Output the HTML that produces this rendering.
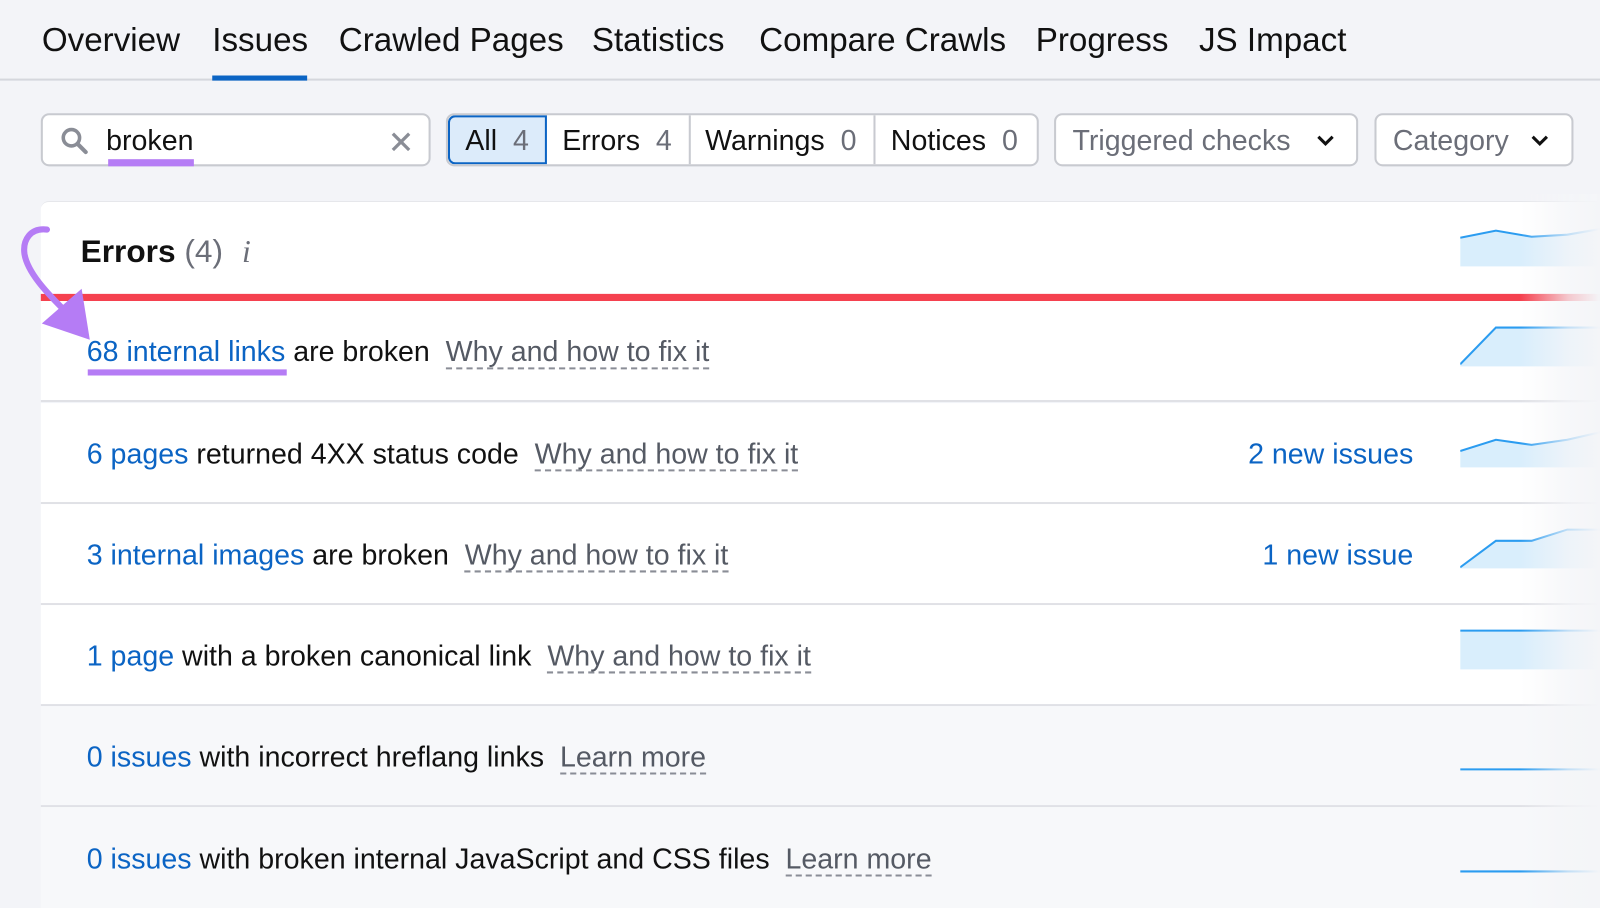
<!DOCTYPE html>
<html><head><style>
*{margin:0;padding:0;box-sizing:border-box}
body{width:1600px;height:890px;overflow:hidden;background:#f3f4f8;font-family:"Liberation Sans",sans-serif;color:#111}
#w{position:absolute;left:0;top:0;width:1568px;height:872px;transform:scale(1.0204);transform-origin:0 0}
.a{position:absolute;white-space:nowrap}
.tab{font-size:32.5px;top:21px;color:#111}
.b{color:#0b64c4}
.g{color:#6b6e78}
.w{color:#555a64;border-bottom:2px dashed #8a8d96;line-height:30px}
.row{position:absolute;left:40px;width:1528px;height:99px;background:#fff;border-bottom:2px solid #e0e1e6}
.t{font-size:28px;top:329px}
.r{right:183px;left:auto}
.box{position:absolute;top:111px;height:52px;background:#fff;border:2px solid #c8cad0;border-radius:8px;font-size:28px}
</style></head><body><div id="w">
<div class="a tab" style="left:41px">Overview</div>
<div class="a tab" style="left:208px">Issues</div>
<div class="a tab" style="left:332px">Crawled Pages</div>
<div class="a tab" style="left:580px">Statistics</div>
<div class="a tab" style="left:744px">Compare Crawls</div>
<div class="a tab" style="left:1015px">Progress</div>
<div class="a tab" style="left:1175px">JS Impact</div>
<div class="a" style="left:0;top:77px;width:1568px;height:2px;background:#d5d7dd"></div>
<div class="a" style="left:208px;top:74px;width:93px;height:5px;background:#0b64c4"></div>

<div class="box" style="left:40px;width:382px">
<svg class="a" style="left:16px;top:10px" width="30" height="30" viewBox="0 0 30 30"><circle cx="12" cy="12" r="8" fill="none" stroke="#8a8d96" stroke-width="3.5"/><path d="M18 18l8 8" stroke="#8a8d96" stroke-width="4" stroke-linecap="round"/></svg>
<div class="a" style="left:62px;top:9px;color:#111">broken</div>
<div class="a" style="left:64px;top:43px;width:84px;height:7px;background:#b57cf5"></div>
<svg class="a" style="left:340px;top:15px" width="22" height="22" viewBox="0 0 22 22"><path d="M3 3l16 16M19 3L3 19" stroke="#8a8d96" stroke-width="3.2"/></svg>
</div>
<div class="box" style="left:437px;width:581px;overflow:hidden">
<div class="a" style="left:0;top:0;width:97px;height:48px;background:#dcebfa;border:2px solid #0b64c4;border-radius:7px 0 0 7px"></div>
<div class="a" style="left:17px;top:9px">All <span class="g">&nbsp;4</span></div>
<div class="a" style="left:236px;top:0;width:2px;height:48px;background:#c8cad0"></div>
<div class="a" style="left:417px;top:0;width:2px;height:48px;background:#c8cad0"></div>
<div class="a" style="left:112px;top:9px">Errors <span class="g">&nbsp;4</span></div>
<div class="a" style="left:252px;top:9px">Warnings <span class="g">&nbsp;0</span></div>
<div class="a" style="left:434px;top:9px">Notices <span class="g">&nbsp;0</span></div>
</div>
<div class="box" style="left:1033px;width:298px"><div class="a g" style="left:16px;top:9px">Triggered checks</div>
<svg class="a" style="left:254px;top:18px" width="20" height="14" viewBox="0 0 20 14"><path d="M3 3l7 7 7-7" fill="none" stroke="#111" stroke-width="3"/></svg></div>
<div class="box" style="left:1347px;width:195px"><div class="a g" style="left:16px;top:9px">Category</div>
<svg class="a" style="left:150px;top:18px" width="20" height="14" viewBox="0 0 20 14"><path d="M3 3l7 7 7-7" fill="none" stroke="#111" stroke-width="3"/></svg></div>

<div class="a" style="left:40px;top:197px;width:1528px;height:94px;background:#fff;border-top:1px solid #e6e7eb;border-radius:8px 0 0 0"></div>
<div class="a" style="left:79px;top:229px;font-size:31px"><b>Errors</b> <span class="g">(4)</span> <i class="g" style="font-family:'Liberation Serif',serif;margin-left:10px">i</i></div>
<div class="a" style="left:40px;top:288px;width:1528px;height:7px;background:#f5414f"></div>
<div class="row" style="top:295px"></div>
<div class="row" style="top:395px"></div>
<div class="row" style="top:494px"></div>
<div class="row" style="top:593px"></div>
<div class="row" style="top:692px;background:#f7f8fa"></div>
<div class="row" style="top:791px;background:#f7f8fa;border:0"></div>

<div class="a t" style="left:85px"><span class="b">68 internal links</span> are broken &nbsp;<span class="w">Why and how to fix it</span></div>
<div class="a" style="left:86px;top:362px;width:195px;height:6px;background:#b57cf5"></div>
<div class="a t" style="left:85px;top:429px"><span class="b">6 pages</span> returned 4XX status code &nbsp;<span class="w">Why and how to fix it</span></div>
<div class="a t b r" style="top:429px">2 new issues</div>
<div class="a t" style="left:85px;top:528px"><span class="b">3 internal images</span> are broken &nbsp;<span class="w">Why and how to fix it</span></div>
<div class="a t b r" style="top:528px">1 new issue</div>
<div class="a t" style="left:85px;top:627px"><span class="b">1 page</span> with a broken canonical link &nbsp;<span class="w">Why and how to fix it</span></div>
<div class="a t" style="left:85px;top:726px"><span class="b">0 issues</span> with incorrect hreflang links &nbsp;<span class="w">Learn more</span></div>
<div class="a t" style="left:85px;top:826px"><span class="b">0 issues</span> with broken internal JavaScript and CSS files &nbsp;<span class="w">Learn more</span></div>

<svg class="a" style="left:1431px;top:220px" width="137" height="650" viewBox="0 0 137 650">
<g fill="#d9eefc" stroke="none">
<path d="M0 13L35 6L70 12L105 10L140 4V41H0Z"/>
<path d="M0 137L35 101H140V139H0Z"/>
<path d="M0 222L35 211L70 216L105 211L140 203V238H0Z"/>
<path d="M0 336L35 310H70L105 299H140V337H0Z"/>
<path d="M0 398H140V436H0Z"/>
</g>
<g fill="none" stroke="#2b9cf0" stroke-width="2">
<path d="M0 13L35 6L70 12L105 10L140 4"/>
<path d="M0 137L35 101H140"/>
<path d="M0 222L35 211L70 216L105 211L140 203"/>
<path d="M0 336L35 310H70L105 299H140"/>
<path d="M0 398H140"/>
<path d="M0 534H140"/>
<path d="M0 634H140"/>
</g>
</svg>
<div class="a" style="left:1490px;top:190px;width:78px;height:700px;background:linear-gradient(to right,rgba(244,245,248,0),rgba(244,245,248,.75) 60%,#f4f5f8)"></div>

<svg class="a" style="left:10px;top:215px" width="90" height="120" viewBox="0 0 90 120">
<path d="M36 10C20 8 12 20 14 34C17 52 36 72 52 88" fill="none" stroke="#b57cf5" stroke-width="6" stroke-linecap="round"/>
<path d="M70 68L78 118L31 102Z" fill="#b57cf5"/>
</svg>
</div></body></html>
